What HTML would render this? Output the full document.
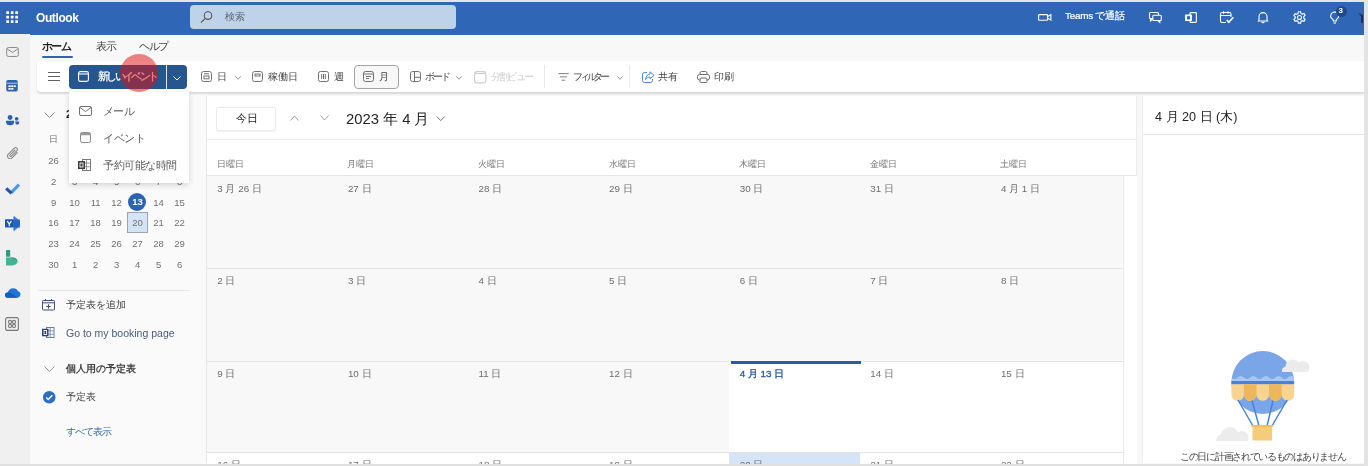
<!DOCTYPE html>
<html lang="ja">
<head>
<meta charset="utf-8">
<style>
*{box-sizing:border-box;margin:0;padding:0}
html,body{width:1368px;height:466px;overflow:hidden;background:#f8f8f8;font-family:"Liberation Sans",sans-serif;color:#424242}
.a{position:absolute}
.t{position:absolute;white-space:nowrap;line-height:1}
svg{position:absolute;overflow:visible}
#top{left:0;top:0;width:1368px;height:2px;background:#e6e6e6}
#hdr{left:0;top:2px;width:1364px;height:32.5px;background:#2f67b6}
#rstrip{left:1364px;top:0;width:4px;height:466px;background:#e3e3e3}
#rail{left:0;top:34px;width:30px;height:430px;background:#f0f0f0}
#bot{left:0;top:464px;width:1368px;height:2px;background:#e0e0e0}
#search{left:189.8px;top:4.8px;width:266.5px;height:24.2px;background:#bed2e9;border-radius:4px}
#tb{left:37px;top:61px;width:1327px;height:30.5px;background:#fff;border-radius:4px 0 0 4px;box-shadow:0 1.5px 2px rgba(0,0,0,.13)}
#lp{left:30px;top:93px;width:177px;height:371px;background:#fafafa}
#cal{left:206px;top:96px;width:931px;height:367px;background:#fff;border-left:1px solid #e8e8e8;border-right:1px solid #ececec}
#rp{left:1142px;top:96px;width:222px;height:367px;background:#fff;border-left:1px solid #ececec}
.nb{left:69px;top:65px;width:97px;height:24px;background:#27558f;border-radius:4px 0 0 4px}
.nbd{left:167px;top:65px;width:20px;height:24px;background:#27558f;border-radius:0 4px 4px 0}
#menu{left:69px;top:92px;width:120px;height:91px;background:#fff;box-shadow:0 2px 6px rgba(0,0,0,.16)}
.tbtxt{font-size:10.2px;color:#424242;top:71.5px}
.mc{font-size:9.5px;color:#707070;width:21px;text-align:center}
.dl{font-size:9.8px;color:#6c6c6c}
.wd{font-size:8.8px;color:#767676;top:159.7px}
</style>
</head>
<body><div style="position:absolute;left:0;top:0;width:1368px;height:466px;will-change:transform">
<div class="a" id="top"></div>
<div class="a" id="hdr"></div>
<div class="a" id="rail"></div>
<div class="a" id="lp"></div>
<div class="a" id="cal"></div>
<div class="a" id="rp"></div>

<!-- calendar -->
<div class="a" style="left:207px;top:139px;width:930px;height:1px;background:#ececec"></div>
<div class="a" style="left:207px;top:175px;width:930px;height:1px;background:#e6e6e6"></div>
<div class="a" style="left:216px;top:107px;width:60px;height:23.5px;border:1px solid #ececec;border-radius:2px;background:#fff;box-shadow:0 1px 1px rgba(0,0,0,.05)"></div>
<div class="t" style="left:236px;top:113px;font-size:10.5px;color:#242424">今日</div>
<svg style="left:290px;top:115px" width="9" height="6" viewBox="0 0 9 6" fill="none" stroke="#a0a0a0" stroke-width="1"><path d="M.5 5.5l4-4.5 4 4.5"/></svg>
<svg style="left:320px;top:115px" width="9" height="6" viewBox="0 0 9 6" fill="none" stroke="#a0a0a0" stroke-width="1"><path d="M.5.5l4 4.5 4-4.5"/></svg>
<div class="t" style="left:346px;top:112px;font-size:14.8px;color:#242424">2023 年 4 月</div>
<svg style="left:436px;top:115.5px" width="9.5" height="5.5" viewBox="0 0 10 6" fill="none" stroke="#6a6a6a" stroke-width="1"><path d="M.5.5l4.5 4.5 4.5-4.5"/></svg>
<div class="t wd" style="left:216.7px">日曜日</div>
<div class="t wd" style="left:347.3px">月曜日</div>
<div class="t wd" style="left:477.9px">火曜日</div>
<div class="t wd" style="left:608.5px">水曜日</div>
<div class="t wd" style="left:739.1px">木曜日</div>
<div class="t wd" style="left:869.7px">金曜日</div>
<div class="t wd" style="left:1000.3px">土曜日</div>
<div class="a" style="left:207.0px;top:176px;width:131.1px;height:92.5px;background:#f8f8f8"></div>
<div class="a" style="left:337.6px;top:176px;width:131.1px;height:92.5px;background:#f8f8f8"></div>
<div class="a" style="left:468.2px;top:176px;width:131.1px;height:92.5px;background:#f8f8f8"></div>
<div class="a" style="left:598.8px;top:176px;width:131.1px;height:92.5px;background:#f8f8f8"></div>
<div class="a" style="left:729.4px;top:176px;width:131.1px;height:92.5px;background:#f8f8f8"></div>
<div class="a" style="left:860.0px;top:176px;width:131.1px;height:92.5px;background:#f8f8f8"></div>
<div class="a" style="left:990.6px;top:176px;width:131.1px;height:92.5px;background:#f8f8f8"></div>
<div class="a" style="left:207.0px;top:268.5px;width:131.1px;height:92.5px;background:#f8f8f8"></div>
<div class="a" style="left:337.6px;top:268.5px;width:131.1px;height:92.5px;background:#f8f8f8"></div>
<div class="a" style="left:468.2px;top:268.5px;width:131.1px;height:92.5px;background:#f8f8f8"></div>
<div class="a" style="left:598.8px;top:268.5px;width:131.1px;height:92.5px;background:#f8f8f8"></div>
<div class="a" style="left:729.4px;top:268.5px;width:131.1px;height:92.5px;background:#f8f8f8"></div>
<div class="a" style="left:860.0px;top:268.5px;width:131.1px;height:92.5px;background:#f8f8f8"></div>
<div class="a" style="left:990.6px;top:268.5px;width:131.1px;height:92.5px;background:#f8f8f8"></div>
<div class="a" style="left:207.0px;top:361px;width:131.1px;height:91px;background:#f8f8f8"></div>
<div class="a" style="left:337.6px;top:361px;width:131.1px;height:91px;background:#f8f8f8"></div>
<div class="a" style="left:468.2px;top:361px;width:131.1px;height:91px;background:#f8f8f8"></div>
<div class="a" style="left:598.8px;top:361px;width:131.1px;height:91px;background:#f8f8f8"></div>
<div class="a" style="left:729.4px;top:361px;width:131.1px;height:91px;background:#ffffff"></div>
<div class="a" style="left:860.0px;top:361px;width:131.1px;height:91px;background:#ffffff"></div>
<div class="a" style="left:990.6px;top:361px;width:131.1px;height:91px;background:#ffffff"></div>
<div class="a" style="left:207.0px;top:452px;width:131.1px;height:18px;background:#ffffff"></div>
<div class="a" style="left:337.6px;top:452px;width:131.1px;height:18px;background:#ffffff"></div>
<div class="a" style="left:468.2px;top:452px;width:131.1px;height:18px;background:#ffffff"></div>
<div class="a" style="left:598.8px;top:452px;width:131.1px;height:18px;background:#ffffff"></div>
<div class="a" style="left:729.4px;top:452px;width:131.1px;height:18px;background:#d6e4f7"></div>
<div class="a" style="left:860.0px;top:452px;width:131.1px;height:18px;background:#ffffff"></div>
<div class="a" style="left:990.6px;top:452px;width:131.1px;height:18px;background:#ffffff"></div>
<div class="a" style="left:207px;top:268px;width:917px;height:1px;background:#e3e3e3"></div>
<div class="a" style="left:207px;top:361px;width:917px;height:1px;background:#e3e3e3"></div>
<div class="a" style="left:207px;top:452px;width:917px;height:1px;background:#e3e3e3"></div>
<div class="a" style="left:1123px;top:176px;width:1px;height:290px;background:#e8e8e8"></div>
<div class="a" style="left:1124px;top:176px;width:13px;height:290px;background:#fff"></div>
<div class="a" style="left:730.5px;top:361px;width:130px;height:3px;background:#2a5aa8"></div>
<div class="t dl" style="left:217.3px;top:183.5px;">3 月 26 日</div>
<div class="t dl" style="left:347.9px;top:183.5px;">27 日</div>
<div class="t dl" style="left:478.5px;top:183.5px;">28 日</div>
<div class="t dl" style="left:609.1px;top:183.5px;">29 日</div>
<div class="t dl" style="left:739.7px;top:183.5px;">30 日</div>
<div class="t dl" style="left:870.3px;top:183.5px;">31 日</div>
<div class="t dl" style="left:1000.9px;top:183.5px;">4 月 1 日</div>
<div class="t dl" style="left:217.3px;top:276.0px;">2 日</div>
<div class="t dl" style="left:347.9px;top:276.0px;">3 日</div>
<div class="t dl" style="left:478.5px;top:276.0px;">4 日</div>
<div class="t dl" style="left:609.1px;top:276.0px;">5 日</div>
<div class="t dl" style="left:739.7px;top:276.0px;">6 日</div>
<div class="t dl" style="left:870.3px;top:276.0px;">7 日</div>
<div class="t dl" style="left:1000.9px;top:276.0px;">8 日</div>
<div class="t dl" style="left:217.3px;top:368.5px;">9 日</div>
<div class="t dl" style="left:347.9px;top:368.5px;">10 日</div>
<div class="t dl" style="left:478.5px;top:368.5px;">11 日</div>
<div class="t dl" style="left:609.1px;top:368.5px;">12 日</div>
<div class="t dl" style="left:739.7px;top:368.5px;color:#2a5aa8;-webkit-text-stroke:.35px #2a5aa8;">4 月 13 日</div>
<div class="t dl" style="left:870.3px;top:368.5px;">14 日</div>
<div class="t dl" style="left:1000.9px;top:368.5px;">15 日</div>
<div class="t dl" style="left:217.3px;top:459.5px;">16 日</div>
<div class="t dl" style="left:347.9px;top:459.5px;">17 日</div>
<div class="t dl" style="left:478.5px;top:459.5px;">18 日</div>
<div class="t dl" style="left:609.1px;top:459.5px;">19 日</div>
<div class="t dl" style="left:739.7px;top:459.5px;">20 日</div>
<div class="t dl" style="left:870.3px;top:459.5px;">21 日</div>
<div class="t dl" style="left:1000.9px;top:459.5px;">22 日</div>
<div class="t" style="left:1155px;top:111px;font-size:12.6px;color:#242424">4 月 20 日 (木)</div>
<div class="a" style="left:1143px;top:134px;width:221px;height:1px;background:#e6e6e6"></div>
<div class="t" style="left:1180px;top:452px;font-size:10px;letter-spacing:-1.3px;color:#424242">この日に計画されているものはありません</div>
<!-- header -->
<svg style="left:5.5px;top:10.7px" width="12" height="12" viewBox="0 0 12 12" fill="#fff"><rect x="0.3" y="0.3" width="2.7" height="2.7" rx=".5"/><rect x="4.8" y="0.3" width="2.7" height="2.7" rx=".5"/><rect x="9.3" y="0.3" width="2.7" height="2.7" rx=".5"/><rect x="0.3" y="4.8" width="2.7" height="2.7" rx=".5"/><rect x="4.8" y="4.8" width="2.7" height="2.7" rx=".5"/><rect x="9.3" y="4.8" width="2.7" height="2.7" rx=".5"/><rect x="0.3" y="9.3" width="2.7" height="2.7" rx=".5"/><rect x="4.8" y="9.3" width="2.7" height="2.7" rx=".5"/><rect x="9.3" y="9.3" width="2.7" height="2.7" rx=".5"/></svg>
<div class="t" style="left:36px;top:11.5px;font-size:12px;letter-spacing:-.4px;font-weight:bold;color:#fff">Outlook</div>
<div class="a" id="search"></div>
<svg style="left:200px;top:11px" width="13" height="12" viewBox="0 0 13 12" fill="none" stroke="#555" stroke-width="1.1"><circle cx="8" cy="4.6" r="3.8"/><path d="M5.3 7.4L1 11.5"/></svg>
<div class="t" style="left:225px;top:12px;font-size:10px;color:#5a6470">検索</div>


<!-- rail icons -->
<svg style="left:5.5px;top:46.5px" width="13" height="10" viewBox="0 0 14 11" fill="none" stroke="#8a8a8a" stroke-width="1.1"><rect x="0.6" y="0.6" width="12.8" height="9.8" rx="1.8"/><path d="M1 2l6 4 6-4"/></svg>
<svg style="left:6px;top:80px" width="12" height="11.5" viewBox="0 0 13 13"><rect x="0" y="0" width="13" height="13" rx="2" fill="#2d62b1"/><rect x="0" y="3" width="13" height="1.3" fill="#9fbbe3"/><rect x="2.5" y="6" width="2.5" height="2" fill="#fff"/><rect x="5.6" y="6" width="2.5" height="2" fill="#fff"/><rect x="8.7" y="6" width="2" height="2" fill="#fff"/><rect x="2.5" y="9" width="2.5" height="2" fill="#fff"/><rect x="5.6" y="9" width="2.5" height="2" fill="#fff"/></svg>
<svg style="left:5.5px;top:115.3px" width="13.3" height="10.3" viewBox="0 0 13 10" fill="#2d62b1"><circle cx="4" cy="2.4" r="2.4"/><path d="M0 5.6h8v.9a4 3.5 0 01-8 0z"/><circle cx="10.4" cy="3.7" r="1.8"/><path d="M9 6.2h4v.6a2 2.6 0 01-4 0z"/></svg>
<svg style="left:7px;top:147px" width="12" height="14" viewBox="0 0 12 14" fill="none" stroke="#8a8a8a" stroke-width="1.1" stroke-linecap="round"><path d="M10.2 5.5L5 10.8a2.6 2.6 0 01-3.7-3.7L7.3 1.1a1.8 1.8 0 012.6 2.6L4.4 9.2a.9.9 0 01-1.3-1.3L8 3"/></svg>
<svg style="left:4px;top:182px" width="16" height="14" viewBox="0 0 16 14" fill="none" stroke-width="3.1" stroke-linecap="butt"><path d="M7.3 10.6L15 2.6" stroke="#4b9aea"/><path d="M2.2 6.3L7.6 11.3" stroke="#1f52ad"/></svg>
<svg style="left:4.5px;top:216px" width="15" height="15" viewBox="0 0 15 15"><path d="M9.5 0.3L14 4.2c.6.5.9 1.3.9 2.1v2.4c0 .8-.3 1.6-.9 2.1L9.5 14.7c-.6.4-1.2 0-1.2-.7V1c0-.7.6-1.1 1.2-.7z" fill="#3a86e6"/><path d="M8.3 3.5h6.6v8H8.3z" fill="#2563c6"/><rect x="0" y="3.3" width="8.5" height="8.3" rx=".8" fill="#1f56b3"/><path d="M2.2 5.2l2.1 2.7 2.1-2.7M4.3 7.9v2.3" stroke="#fff" stroke-width="1.2" fill="none"/></svg>
<svg style="left:6px;top:250px" width="12" height="15.5" viewBox="0 0 12 15.5"><path d="M0 .8A.8.8 0 01.8 0h2.6a.8.8 0 01.8.8v6H0z" fill="#2f9c80"/><path d="M0 7.6h6.2a5.4 3.95 0 010 7.9H0z" fill="#46b294"/><path d="M4.2 7.6h2a5.4 3.95 0 015.2 3z" fill="#2f9c80"/></svg>
<svg style="left:4.5px;top:288px" width="15.5" height="10" viewBox="0 0 16 10"><path d="M3.5 10C1.5 10 0 8.8 0 7.2 0 5.7 1.2 4.6 2.8 4.5 3.3 2 5.6 0 8.5 0c2.3 0 4.2 1.3 5 3.2 1.5.3 2.5 1.6 2.5 3.2 0 2-1.6 3.6-3.6 3.6z" fill="#1f74d4"/><path d="M3.5 10C1.5 10 0 8.8 0 7.2 0 5.9 1 4.8 2.3 4.6c1.5-.4 3.4 0 5 1.3L13 10z" fill="#0f5fbe"/></svg>
<svg style="left:5px;top:317px" width="14" height="14" viewBox="0 0 14 14" fill="none" stroke="#7a7a7a" stroke-width="1.1"><rect x="0.6" y="0.6" width="12.8" height="12.8" rx="2"/><circle cx="5" cy="5" r="1.6"/><circle cx="9" cy="5" r="1.6"/><circle cx="5" cy="9" r="1.6"/><circle cx="9" cy="9" r="1.6"/></svg>

<!-- tabs -->
<div class="t" style="left:42px;top:41px;font-size:11px;letter-spacing:-1.6px;font-weight:bold;color:#242424">ホーム</div>
<div class="a" style="left:42px;top:56px;width:31px;height:2px;background:#2f67b6;border-radius:1px"></div>
<div class="t" style="left:95.5px;top:41px;font-size:10.5px;letter-spacing:-.5px;color:#424242">表示</div>
<div class="t" style="left:139px;top:41px;font-size:11px;letter-spacing:-1.5px;color:#424242">ヘルプ</div>

<!-- toolbar -->
<div class="a" id="tb"></div>
<svg style="left:48px;top:72px" width="12" height="9" viewBox="0 0 12 9" stroke="#616161" stroke-width="1"><path d="M0 .5h12M0 4.5h12M0 8.5h12"/></svg>
<div class="a nb"></div><div class="a nbd"></div>
<div class="a" style="left:166px;top:65px;width:1px;height:24px;background:#dfe6ef"></div>
<svg style="left:78px;top:71px" width="11" height="11" viewBox="0 0 11 11" fill="none" stroke="#fff" stroke-width="1.1"><rect x="0.6" y="0.6" width="9.8" height="9.8" rx="1.6"/><path d="M.6 3h9.8"/></svg>
<div class="t" style="left:98px;top:71px;font-size:10.8px;letter-spacing:-2.7px;color:#fff;-webkit-text-stroke:.25px #fff">新しいイベント</div>
<svg style="left:173px;top:75.5px" width="8" height="4.5" viewBox="0 0 9 5" fill="none" stroke="#fff" stroke-width="1.1"><path d="M.5.5l4 4 4-4"/></svg>
<div class="a" style="left:119.5px;top:53.8px;width:38.2px;height:38.2px;border-radius:50%;background:rgba(222,20,20,.52)"></div>


<!-- toolbar items -->
<svg style="left:201px;top:71.3px" width="11" height="11" viewBox="0 0 11 11" fill="none" stroke="#707070" stroke-width="1"><rect x="0.5" y="0.5" width="10" height="10" rx="2.2"/><path d="M3 2.8h5"/><rect x="3" y="5" width="5" height="2.8"/></svg>
<div class="t tbtxt" style="left:217px">日</div>
<svg style="left:235px;top:76px" width="6" height="4" viewBox="0 0 6 4" fill="none" stroke="#8a8a8a" stroke-width=".9"><path d="M.3.3l2.7 3 2.7-3"/></svg>
<svg style="left:252px;top:71.3px" width="11" height="11" viewBox="0 0 11 11" fill="none" stroke="#707070" stroke-width="1"><rect x="0.5" y="0.5" width="10" height="10" rx="2.2"/><rect x="3" y="3" width="5" height="2"/></svg>
<div class="t tbtxt" style="left:268px">稼働日</div>
<svg style="left:318px;top:71.3px" width="11" height="11" viewBox="0 0 11 11" fill="none" stroke="#707070" stroke-width="1"><rect x="0.5" y="0.5" width="10" height="10" rx="2"/><path d="M3.7 3v5M5.5 3v5M7.3 3v5"/></svg>
<div class="t tbtxt" style="left:334px">週</div>
<div class="a" style="left:354px;top:65px;width:45px;height:24px;border:1px solid #a3a3a3;border-radius:4px;background:#f8f8f8"></div>
<svg style="left:363px;top:71.3px" width="11" height="11" viewBox="0 0 11 11" fill="none" stroke="#707070" stroke-width="1"><rect x="0.5" y="0.5" width="10" height="10" rx="2"/><path d="M.5 3h10M3 5.5h5M3 7.5h3"/></svg>
<div class="t tbtxt" style="left:379px">月</div>
<svg style="left:410px;top:71.3px" width="11" height="11" viewBox="0 0 11 11" fill="none" stroke="#707070" stroke-width="1"><rect x="0.5" y="0.5" width="10" height="10" rx="2.2"/><path d="M4.5 .5v10M4.5 6.3h6"/></svg>
<div class="t tbtxt" style="left:425px;letter-spacing:-1.8px">ボード</div>
<svg style="left:456px;top:76px" width="6" height="4" viewBox="0 0 6 4" fill="none" stroke="#8a8a8a" stroke-width=".9"><path d="M.3.3l2.7 3 2.7-3"/></svg>
<svg style="left:474px;top:70.7px" width="12.5" height="12.5" viewBox="0 0 12.5 12.5" fill="none" stroke="#cdcdcd" stroke-width="1.1"><rect x="0.6" y="0.6" width="11.3" height="11.3" rx="2.5"/><path d="M1 2.6h10.5"/></svg>
<div class="t tbtxt" style="left:491px;color:#cbcbcb;letter-spacing:-1.8px">分割ビュー</div>
<div class="a" style="left:544px;top:65px;width:1px;height:23px;background:#e9e9e9"></div>
<svg style="left:558px;top:72.5px" width="11" height="8" viewBox="0 0 11 8" fill="none" stroke="#707070" stroke-width=".9"><path d="M.3 .6h10.4M2 3.9h7M3.7 7.2h3.6"/></svg>
<div class="t tbtxt" style="left:573px;letter-spacing:-3.2px">フィルター</div>
<svg style="left:617px;top:76px" width="6" height="4" viewBox="0 0 6 4" fill="none" stroke="#8a8a8a" stroke-width=".9"><path d="M.3.3l2.7 3 2.7-3"/></svg>
<div class="a" style="left:629px;top:65px;width:1px;height:23px;background:#e9e9e9"></div>
<svg style="left:642px;top:71px" width="13" height="12" viewBox="0 0 13 12" fill="none" stroke="#4a85d4" stroke-width="1"><path d="M5 1.5H2.5a2 2 0 00-2 2v6a2 2 0 002 2h6a2 2 0 002-2V8"/><path d="M8 .8l4 3.5-4 3.5V6C6 6 4.3 7 3.5 8.5 3.8 5.5 5.5 3.3 8 3z"/></svg>
<div class="t tbtxt" style="left:658px">共有</div>
<svg style="left:697px;top:71px" width="13" height="12" viewBox="0 0 13 12" fill="none" stroke="#707070" stroke-width="1"><path d="M3 3.5V2a1.5 1.5 0 011.5-1.5h4A1.5 1.5 0 0110 2v1.5"/><rect x="0.5" y="3.5" width="12" height="5.5" rx="2"/><rect x="3" y="7" width="7" height="4.5" rx="1" fill="#fff"/></svg>
<div class="t tbtxt" style="left:714px">印刷</div>

<!-- left pane -->
<svg style="left:44px;top:112px" width="11" height="6" viewBox="0 0 11 6" fill="none" stroke="#8a8a8a" stroke-width="1"><path d="M.5.5l5 5 5-5"/></svg>
<div class="t" style="left:66px;top:109px;font-size:11px;font-weight:bold;color:#242424">2</div>
<div class="a" style="left:128.3px;top:192.5px;width:18px;height:18px;border-radius:50%;background:#2b62b6"></div>
<div class="a" style="left:127px;top:212px;width:21px;height:21px;background:#d4e3f6;border:1px solid #9ba4b0"></div>
<div class="t mc" style="left:43.1px;top:134.6px;font-size:9px">日</div>
<div class="t mc" style="left:64.1px;top:134.6px;font-size:9px">月</div>
<div class="t mc" style="left:85.1px;top:134.6px;font-size:9px">火</div>
<div class="t mc" style="left:106.1px;top:134.6px;font-size:9px">水</div>
<div class="t mc" style="left:127.1px;top:134.6px;font-size:9px">木</div>
<div class="t mc" style="left:148.1px;top:134.6px;font-size:9px">金</div>
<div class="t mc" style="left:169.1px;top:134.6px;font-size:9px">土</div>
<div class="t mc" style="left:43.1px;top:156.1px;font-size:9.5px">26</div>
<div class="t mc" style="left:64.1px;top:156.1px;font-size:9.5px">27</div>
<div class="t mc" style="left:85.1px;top:156.1px;font-size:9.5px">28</div>
<div class="t mc" style="left:106.1px;top:156.1px;font-size:9.5px">29</div>
<div class="t mc" style="left:127.1px;top:156.1px;font-size:9.5px">30</div>
<div class="t mc" style="left:148.1px;top:156.1px;font-size:9.5px">31</div>
<div class="t mc" style="left:169.1px;top:156.1px;font-size:9.5px">1</div>
<div class="t mc" style="left:43.1px;top:176.8px;font-size:9.5px">2</div>
<div class="t mc" style="left:64.1px;top:176.8px;font-size:9.5px">3</div>
<div class="t mc" style="left:85.1px;top:176.8px;font-size:9.5px">4</div>
<div class="t mc" style="left:106.1px;top:176.8px;font-size:9.5px">5</div>
<div class="t mc" style="left:127.1px;top:176.8px;font-size:9.5px">6</div>
<div class="t mc" style="left:148.1px;top:176.8px;font-size:9.5px">7</div>
<div class="t mc" style="left:169.1px;top:176.8px;font-size:9.5px">8</div>
<div class="t mc" style="left:43.1px;top:197.6px;font-size:9.5px">9</div>
<div class="t mc" style="left:64.1px;top:197.6px;font-size:9.5px">10</div>
<div class="t mc" style="left:85.1px;top:197.6px;font-size:9.5px">11</div>
<div class="t mc" style="left:106.1px;top:197.6px;font-size:9.5px">12</div>
<div class="t mc" style="left:127.1px;top:197.3px;font-size:9.5px;color:#fff;font-weight:bold;">13</div>
<div class="t mc" style="left:148.1px;top:197.6px;font-size:9.5px">14</div>
<div class="t mc" style="left:169.1px;top:197.6px;font-size:9.5px">15</div>
<div class="t mc" style="left:43.1px;top:218.4px;font-size:9.5px">16</div>
<div class="t mc" style="left:64.1px;top:218.4px;font-size:9.5px">17</div>
<div class="t mc" style="left:85.1px;top:218.4px;font-size:9.5px">18</div>
<div class="t mc" style="left:106.1px;top:218.4px;font-size:9.5px">19</div>
<div class="t mc" style="left:127.1px;top:218.4px;font-size:9.5px">20</div>
<div class="t mc" style="left:148.1px;top:218.4px;font-size:9.5px">21</div>
<div class="t mc" style="left:169.1px;top:218.4px;font-size:9.5px">22</div>
<div class="t mc" style="left:43.1px;top:239.4px;font-size:9.5px">23</div>
<div class="t mc" style="left:64.1px;top:239.4px;font-size:9.5px">24</div>
<div class="t mc" style="left:85.1px;top:239.4px;font-size:9.5px">25</div>
<div class="t mc" style="left:106.1px;top:239.4px;font-size:9.5px">26</div>
<div class="t mc" style="left:127.1px;top:239.4px;font-size:9.5px">27</div>
<div class="t mc" style="left:148.1px;top:239.4px;font-size:9.5px">28</div>
<div class="t mc" style="left:169.1px;top:239.4px;font-size:9.5px">29</div>
<div class="t mc" style="left:43.1px;top:259.5px;font-size:9.5px">30</div>
<div class="t mc" style="left:64.1px;top:259.5px;font-size:9.5px">1</div>
<div class="t mc" style="left:85.1px;top:259.5px;font-size:9.5px">2</div>
<div class="t mc" style="left:106.1px;top:259.5px;font-size:9.5px">3</div>
<div class="t mc" style="left:127.1px;top:259.5px;font-size:9.5px">4</div>
<div class="t mc" style="left:148.1px;top:259.5px;font-size:9.5px">5</div>
<div class="t mc" style="left:169.1px;top:259.5px;font-size:9.5px">6</div>
<div class="a" style="left:38px;top:290px;width:151px;height:1px;background:#e6e6e6"></div>
<svg style="left:42px;top:298.5px" width="13" height="11.5" viewBox="0 0 13 11.5" fill="none" stroke="#3d4f6e" stroke-width="1"><rect x="0.5" y="1.5" width="12" height="9.5" rx=".8"/><path d="M.5 3.8h12M6.5 5.3v4.3M4.3 7.5h4.4M3.5 0v2M9.5 0v2"/></svg>
<div class="t" style="left:66px;top:300px;font-size:10px;color:#424242">予定表を追加</div>
<svg style="left:42px;top:327px" width="12.5" height="11" viewBox="0 0 12.5 11"><rect x="4.5" y="0.5" width="7.5" height="10" fill="#fff" stroke="#6a7fa8" stroke-width="1"/><path d="M4.5 3.8h7.5M4.5 7.2h7.5M8.2.5v10" stroke="#6a7fa8" stroke-width=".8"/><rect x="0" y="1.8" width="6.5" height="7.5" fill="#233f8a"/><rect x="2" y="3.5" width="2.6" height="4" fill="none" stroke="#fff" stroke-width=".9"/></svg>
<div class="t" style="left:66px;top:327.5px;font-size:10.5px;color:#4a5a78">Go to my booking page</div>
<svg style="left:44px;top:366px" width="11" height="6" viewBox="0 0 11 6" fill="none" stroke="#9a9a9a" stroke-width="1"><path d="M.5.5l5 5 5-5"/></svg>
<div class="t" style="left:66px;top:364px;font-size:10px;font-weight:bold;color:#424242">個人用の予定表</div>
<svg style="left:42.5px;top:390.5px" width="12.5" height="12.5" viewBox="0 0 13 13"><circle cx="6.5" cy="6.5" r="6.5" fill="#2f6cc8"/><path d="M3.4 6.8l2.1 2.1 4.2-4.4" fill="none" stroke="#fff" stroke-width="1.5"/></svg>
<div class="t" style="left:66px;top:392px;font-size:10px;color:#424242">予定表</div>
<div class="t" style="left:66px;top:427px;font-size:10px;letter-spacing:-1px;color:#3a64a8">すべて表示</div>


<!-- dropdown menu -->
<div class="a" id="menu"></div>
<svg style="left:79px;top:106px" width="13" height="10" viewBox="0 0 13 10" fill="none" stroke="#707070" stroke-width="1"><rect x="0.5" y="0.5" width="12" height="9" rx="1.5"/><path d="M1 1.5l5.5 4 5.5-4"/></svg>
<div class="t" style="left:103px;top:106px;font-size:11px;color:#5a5a5a;letter-spacing:-.6px">メール</div>
<svg style="left:80px;top:132px" width="11" height="11" viewBox="0 0 11 11"><rect x="0.5" y="0.5" width="10" height="10" rx="1.8" fill="none" stroke="#8a8a8a" stroke-width="1"/><path d="M.5 2.3A1.8 1.8 0 012.3.5h6.4a1.8 1.8 0 011.8 1.8v.9H.5z" fill="#9a9a9a"/></svg>
<div class="t" style="left:103px;top:133px;font-size:11px;color:#5a5a5a;letter-spacing:-.3px">イベント</div>
<svg style="left:78px;top:159px" width="13" height="12" viewBox="0 0 13 12"><rect x="4.5" y="0.5" width="8" height="11" fill="#fff" stroke="#7a7a7a" stroke-width="1"/><path d="M4.5 4h8M4.5 7.7h8M8.5.5v11" stroke="#7a7a7a" stroke-width=".8"/><rect x="0" y="2" width="7" height="8" fill="#3a3a3a"/><rect x="2" y="4" width="3" height="4" fill="none" stroke="#fff" stroke-width=".9"/></svg>
<div class="t" style="left:103px;top:159.5px;font-size:10.5px;letter-spacing:-.5px;color:#5a5a5a">予約可能な時間</div>

<!-- header right -->
<svg style="left:1038px;top:13.8px" width="13.5" height="6.8" viewBox="0 0 13.5 6.8" fill="none" stroke="#fff" stroke-width="1.1"><rect x="0.6" y="0.6" width="9" height="5.6" rx=".8"/><path d="M9.6 2.6l3.3-1.8v5.2L9.6 4.2"/></svg>
<div class="t" style="left:1065px;top:11px;font-size:9.9px;letter-spacing:-.25px;color:#fff;-webkit-text-stroke:.2px #fff">Teams で通話</div>
<svg style="left:1149px;top:12px" width="13" height="11" viewBox="0 0 13 11" fill="none" stroke="#fff" stroke-width="1.1"><path d="M3 6.5H1.5a1 1 0 01-1-1v-4a1 1 0 011-1h7a1 1 0 011 1V3"/><path d="M1.5 6.5v2.5L4 6.5"/><rect x="3.8" y="3.2" width="8.5" height="5.3" rx="1"/><path d="M10.8 8.5v2l-2-2"/></svg>
<svg style="left:1185px;top:12px" width="12" height="11" viewBox="0 0 12 11"><rect x="5" y="0.6" width="6.4" height="9.8" rx=".8" fill="none" stroke="#fff" stroke-width="1.1"/><rect x="0" y="2.5" width="7" height="6.5" rx=".8" fill="#fff"/><rect x="2" y="4.2" width="3" height="3.2" fill="#2f67b6"/></svg>
<svg style="left:1220px;top:11px" width="14" height="13" viewBox="0 0 14 13" fill="none" stroke="#fff" stroke-width="1.1"><path d="M6 11.5H2a1.5 1.5 0 01-1.5-1.5V3A1.5 1.5 0 012 1.5h7.5A1.5 1.5 0 0111 3v3"/><path d="M.5 4.5h10.5M3.5.2v2.6M8 .2v2.6"/><path d="M6.8 9l2 2.2 4.5-5" stroke-width="1.6"/></svg>
<svg style="left:1258px;top:12px" width="10" height="11" viewBox="0 0 10 11" fill="none" stroke="#fff" stroke-width="1.1"><path d="M1 8V4.6a4 4 0 018 0V8l.6 1H.4z"/><path d="M3.7 9.8a1.4 1.4 0 002.6 0"/></svg>
<svg style="left:1293px;top:11px" width="13" height="13" viewBox="0 0 13 13" fill="none" stroke="#fff" stroke-width="1.1"><circle cx="6.5" cy="6.5" r="2"/><path d="M5.4.7h2.2l.4 1.7 1.3.7 1.7-.6 1.1 1.9-1.3 1.2v1.6l1.3 1.2-1.1 1.9-1.7-.6-1.3.7-.4 1.7H5.4L5 10.4l-1.3-.7-1.7.6L.9 8.4l1.3-1.2V5.8L.9 4.6 2 2.7l1.7.6L5 2.4z"/></svg>
<svg style="left:1330px;top:12px" width="10" height="12" viewBox="0 0 10 12" fill="none" stroke="#fff" stroke-width="1.1"><path d="M3.3 9V8C2.8 7 .6 6 .6 4.2a4.1 4.1 0 018.2 0C8.8 6 6.7 7 6.2 8v1z"/><path d="M3.5 11h2.5"/></svg>
<div class="a" style="left:1335.5px;top:5.5px;width:11px;height:11px;border-radius:50%;background:#21498a"></div>
<div class="t" style="left:1338.5px;top:7px;font-size:8px;font-weight:bold;color:#fff">3</div>
<svg style="left:1358px;top:12px" width="6" height="12" viewBox="0 0 6 12"><path d="M0 1l3 3v7h2V3z" fill="#1f2f4f"/></svg>

<!-- balloon -->
<svg style="left:1210px;top:345px" width="110" height="100" viewBox="0 0 110 100">
<defs><clipPath id="bc"><circle cx="52.8" cy="37.5" r="31.4"/></clipPath></defs>
<path d="M6 96a6.5 6.5 0 015-6.5 9 9 0 0117-2 6.5 6.5 0 019.5 8.5z" fill="#ececec"/>
<g clip-path="url(#bc)">
<rect x="0" y="0" width="110" height="80" fill="#7aa6e8"/>
<path d="M15 32.5q3.1-3 6.3 0t6.3 0 6.3 0 6.3 0 6.3 0 6.3 0 6.3 0 6.3 0 6.3 0 6.3 0 6.3 0 6.3 0V36H15z" fill="#a9c7f2"/>
<rect x="0" y="36" width="110" height="3.2" fill="#4a82d6"/>
</g>
<path d="M21.4 39.2h62.8v10.3a6.28 6.28 0 01-12.56 0 6.28 6.28 0 01-12.56 0 6.28 6.28 0 01-12.56 0 6.28 6.28 0 01-12.56 0 6.28 6.28 0 01-12.56 0z" fill="#f8d392"/>
<path d="M33.96 39.2h12.56v10.3a6.28 6.28 0 01-12.56 0z" fill="#ecb65c"/>
<path d="M59.08 39.2h12.56v10.3a6.28 6.28 0 01-12.56 0z" fill="#ecb65c"/>
<path d="M28 55l15 26M42 55.5l7 25.5M63 55.5l-6 25.5M77 55l-15 26" stroke="#4a82d6" stroke-width="1.5" fill="none"/>
<rect x="42.5" y="80.5" width="19.5" height="15" fill="#f6cb7c"/>
<rect x="41.5" y="80" width="21.5" height="2" fill="#f0bd62"/>
<path d="M72 27a5 5 0 013.5-5.5 7.5 7.5 0 0113.5-4 6 6 0 018.5 9.5z" fill="#ebebeb"/>
</svg>

<div class="a" id="bot"></div>
<div class="a" id="rstrip"></div>
</div></body>
</html>
